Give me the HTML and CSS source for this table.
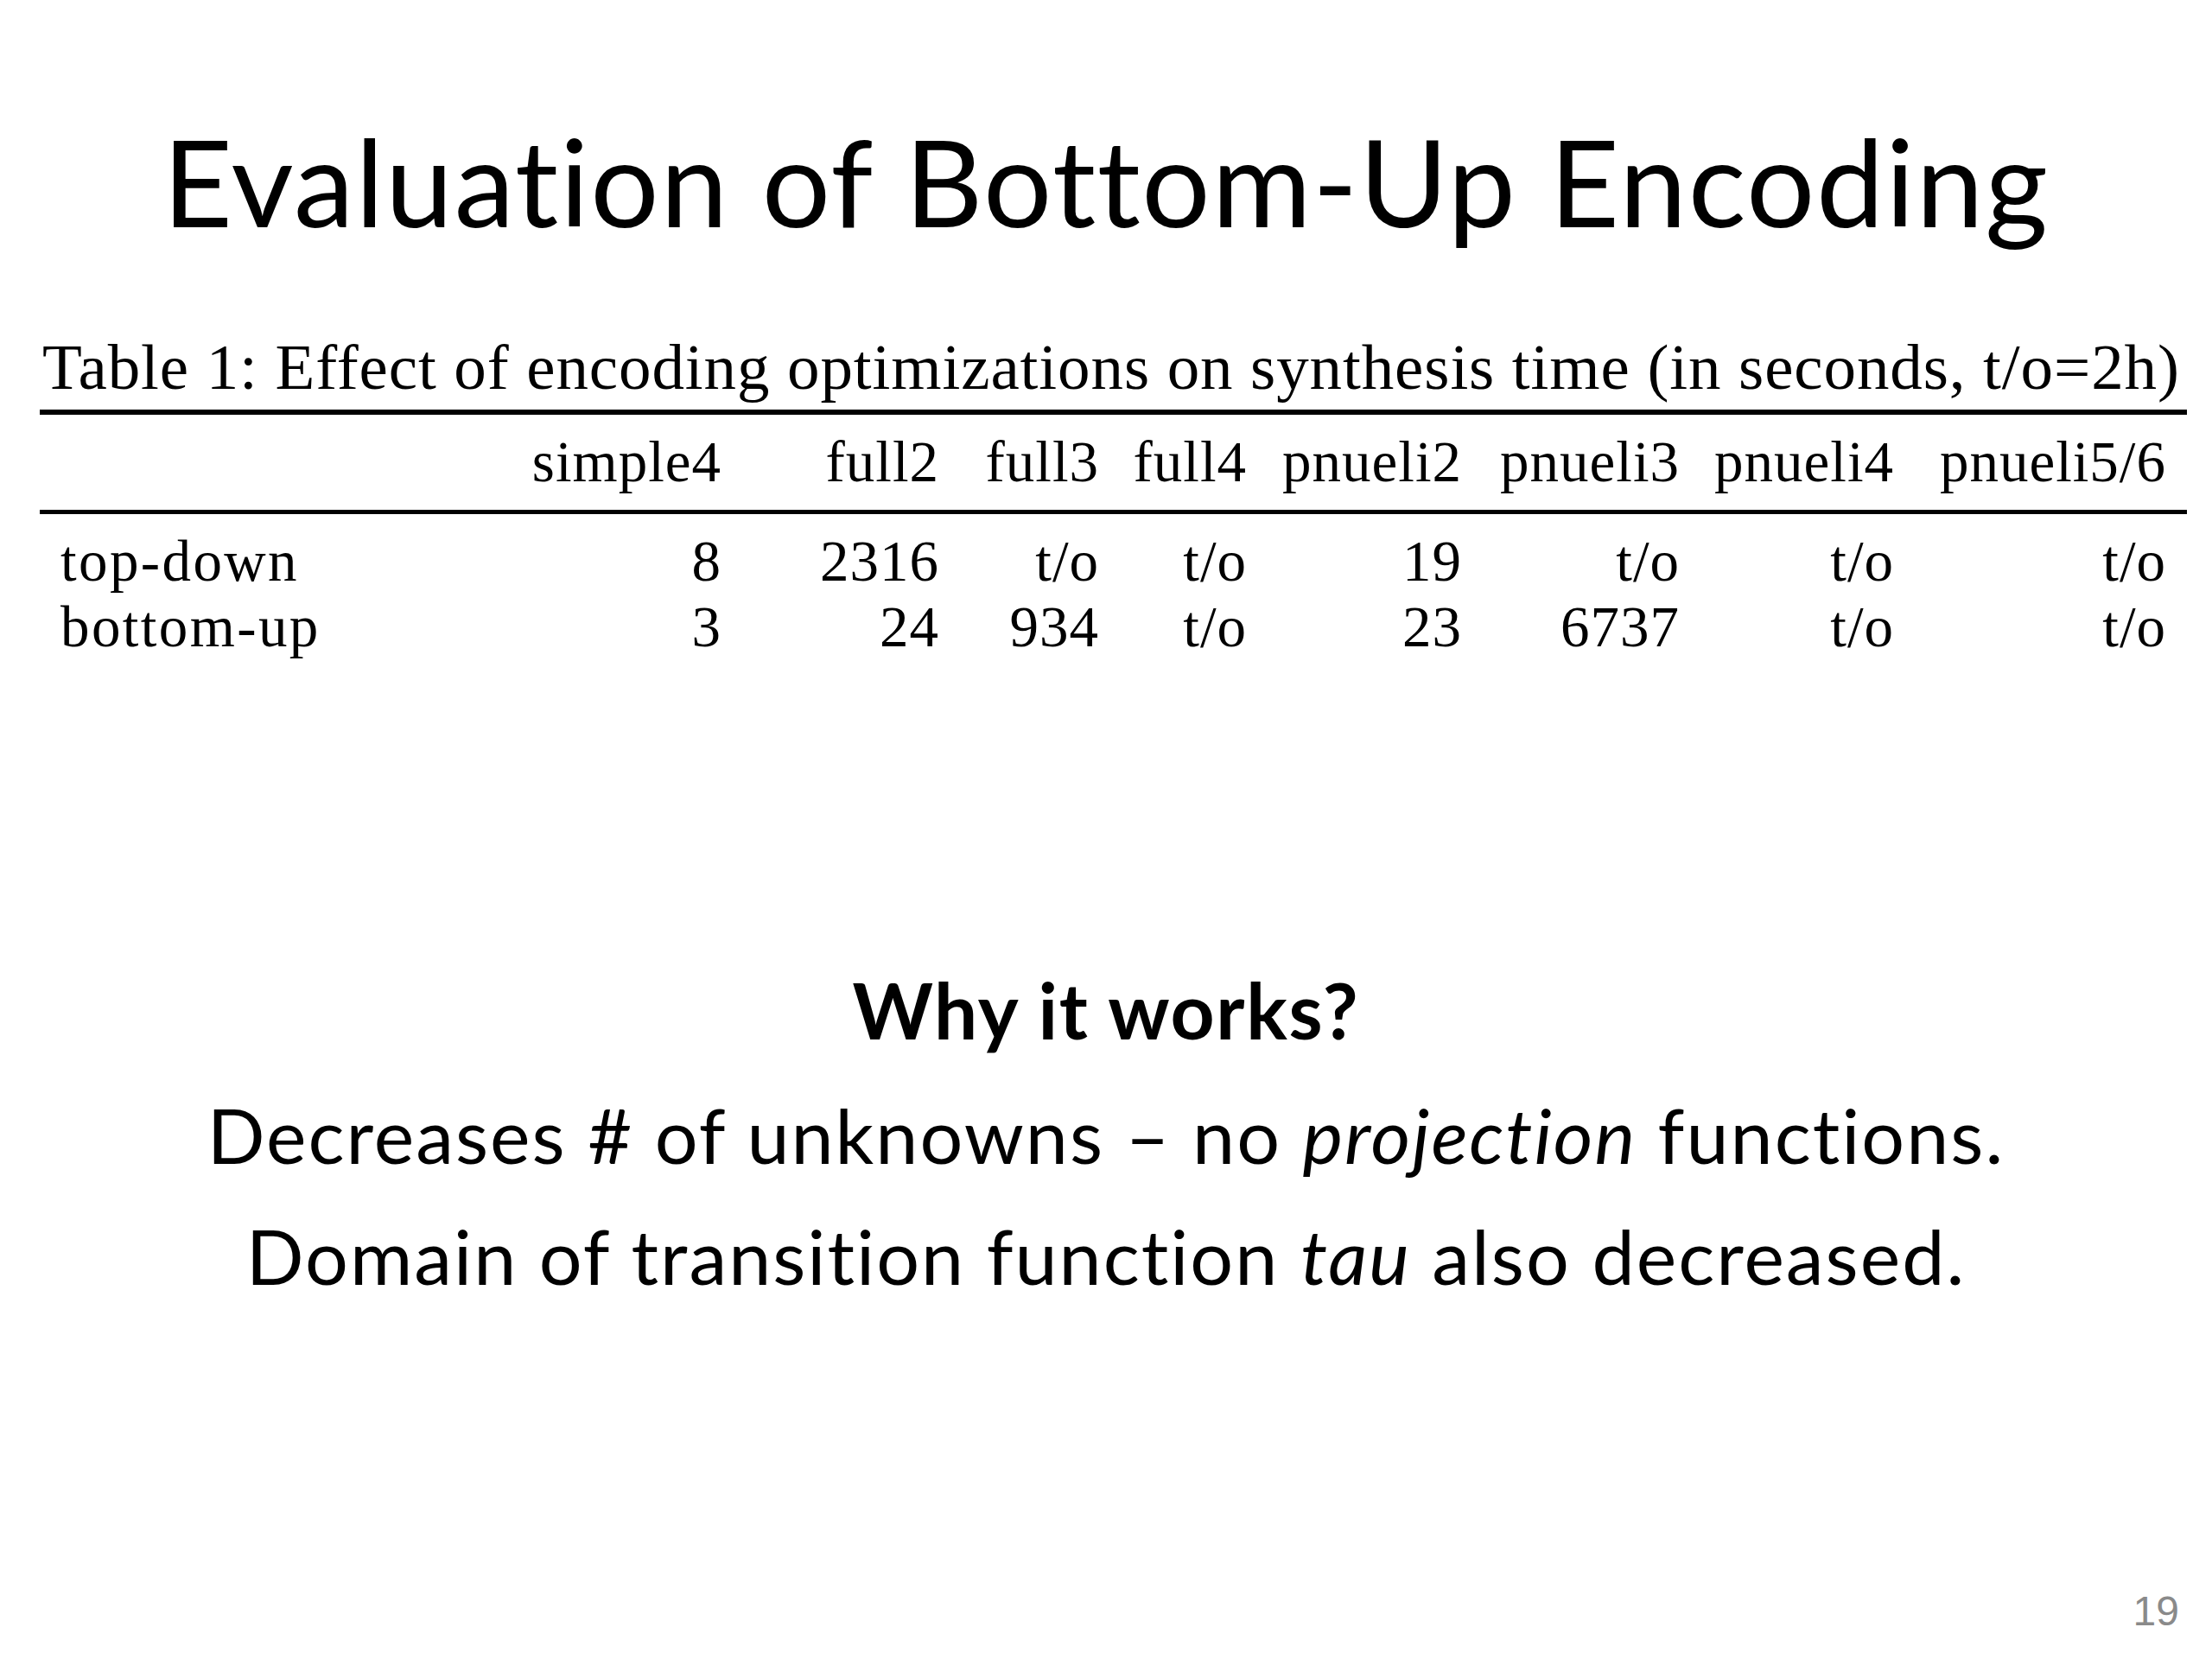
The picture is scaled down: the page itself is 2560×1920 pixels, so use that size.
FILE: index.html
```html
<!DOCTYPE html>
<html lang="en">
<head>
<meta charset="utf-8">
<title>Evaluation of Bottom-Up Encoding</title>
<link rel="stylesheet" href="styles.css">
</head>
<body>
<div class="slide">
  <h1 class="title">Evaluation of Bottom-Up Encoding</h1>

  <div class="table-block">
    <div class="caption">Table 1: Effect of encoding optimizations on synthesis time (in seconds, t/o=2h)</div>
    <div class="rule rule-top"></div>
    <div class="trow thead">
      <div class="cell label"></div>
      <div class="cell">simple4</div>
      <div class="cell">full2</div>
      <div class="cell">full3</div>
      <div class="cell">full4</div>
      <div class="cell">pnueli2</div>
      <div class="cell">pnueli3</div>
      <div class="cell">pnueli4</div>
      <div class="cell last">pnueli5/6</div>
    </div>
    <div class="rule rule-mid"></div>
    <div class="tbody">
      <div class="trow">
        <div class="cell label">top-down</div>
        <div class="cell">8</div>
        <div class="cell">2316</div>
        <div class="cell">t/o</div>
        <div class="cell">t/o</div>
        <div class="cell">19</div>
        <div class="cell">t/o</div>
        <div class="cell">t/o</div>
        <div class="cell last">t/o</div>
      </div>
      <div class="trow">
        <div class="cell label">bottom-up</div>
        <div class="cell">3</div>
        <div class="cell">24</div>
        <div class="cell">934</div>
        <div class="cell">t/o</div>
        <div class="cell">23</div>
        <div class="cell">6737</div>
        <div class="cell">t/o</div>
        <div class="cell last">t/o</div>
      </div>
    </div>
  </div>

  <div class="points">
    <p class="why">Why it works?</p>
    <p class="point p1">Decreases # of unknowns – no <em>projection</em> functions.</p>
    <p class="point p2">Domain of transition function <em>tau</em> also decreased.</p>
  </div>

  <div class="page-num">19</div>
</div>
</body>
</html>
```

FILE: styles.css
```css
html, body {
  margin: 0;
  padding: 0;
  background: #ffffff;
}

.slide {
  width: 2560px;
  height: 1920px;
  box-sizing: border-box;
  display: flex;
  flex-direction: column;
  background: #ffffff;
  color: #000000;
  padding: 0 38px 31px 0;
}

.title {
  margin: 125px 0 0 38px;
  font-family: Lato, "Open Sans", sans-serif;
  font-weight: 400;
  font-size: 140px;
  line-height: 1.2;
  letter-spacing: 1.7px;
  font-variant-ligatures: none;
  text-align: center;
  white-space: nowrap;
}

.table-block {
  margin: 94px 0 0 46px;
  width: 2485px;
  font-family: "Liberation Serif", "Times New Roman", serif;
  font-variant-ligatures: none;
}

.caption {
  font-size: 75px;
  line-height: 1;
  letter-spacing: 0.9px;
  padding-left: 3px;
  white-space: nowrap;
  margin-bottom: 12px;
}

.rule {
  background: #000000;
}

.rule-top {
  height: 6px;
}

.rule-mid {
  height: 5px;
}

.trow {
  display: grid;
  grid-template-columns: 554px 234px 252px 185px 171px 249px 252px 248px 340px;
  font-size: 67px;
  letter-spacing: 1px;
}

.thead {
  line-height: 1;
  padding: 21px 0 22px;
}

.tbody {
  padding-top: 16px;
}

.tbody .trow {
  line-height: 76px;
}

.cell {
  text-align: right;
  white-space: nowrap;
  margin-right: -1px;
}

.cell.label {
  text-align: left;
  padding-left: 24px;
  letter-spacing: 2.4px;
}

.cell.last {
  padding-right: 25px;
}

.points {
  margin-top: 353px;
  margin-left: 38px;
  font-family: Lato, "Open Sans", sans-serif;
  font-variant-ligatures: none;
  text-align: center;
}

.points p {
  margin: 0;
  line-height: 1.2;
  white-space: nowrap;
}

.why {
  font-weight: 700;
  font-size: 89px;
  letter-spacing: 1.7px;
}

.point {
  font-size: 88px;
  letter-spacing: 2px;
}

.p1 {
  margin-top: 38px !important;
}

.p2 {
  margin-top: 35px !important;
}

.point em {
  font-style: italic;
}

.page-num {
  margin-top: auto;
  align-self: flex-end;
  font-family: "Liberation Sans", Arial, sans-serif;
  font-size: 48px;
  line-height: 1;
  color: #8a8a8a;
}
```
